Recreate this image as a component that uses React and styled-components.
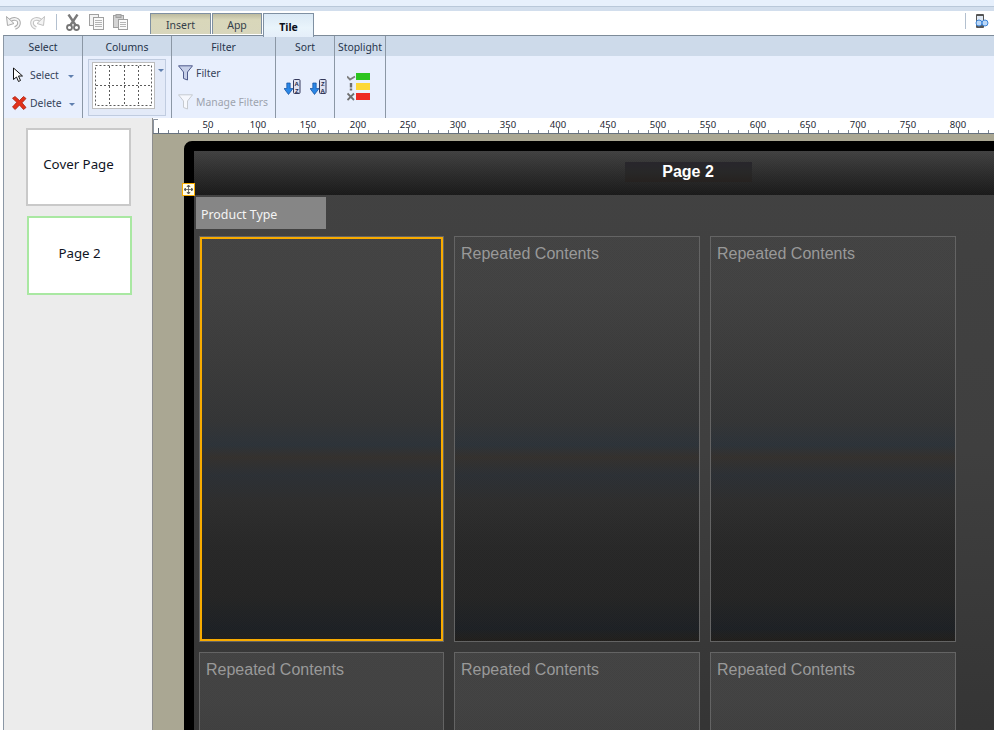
import React from 'react'
import styled, { createGlobalStyle, css } from 'styled-components'

const GlobalStyle = createGlobalStyle`
  html, body { margin: 0; padding: 0; background: #fff; overflow: hidden; }
  body { font-family: "Noto Sans", "Liberation Sans", sans-serif; }
`

const Page = styled.div`
  width: 994px;
  height: 730px;
  display: flex;
  flex-direction: column;
  overflow: hidden;
`

const TopStrip = styled.div`
  height: 11px;
  flex: none;
  background: linear-gradient(#e7f0fc 0 6px, #b9c8d9 6px 7px, #d2deed 7px);
`

const Toolbar = styled.div`
  height: 24px;
  flex: none;
  display: flex;
  align-items: flex-start;
  padding-left: 5px;
`

const ToolIcons = styled.div`
  width: 145px;
  height: 20px;
  padding-top: 1px;
  display: flex;
  align-items: center;
  gap: 9px;
  svg { flex: none; }
`

const ToolSep = styled.span`
  width: 1px;
  height: 16px;
  background: #b3c0cf;
  margin: ${p => p.$margin || '0 0 0 1px'};
  flex: none;
`

const Tabs = styled.div`
  display: flex;
  align-items: flex-start;
  gap: 1px;
  padding-top: 2px;
  flex: 1;
  position: relative;
  z-index: 1;
`

const Tab = styled.div`
  height: 21px;
  box-sizing: border-box;
  width: ${p => p.$width}px;
  border: 1px solid #7f90a2;
  border-bottom: none;
  display: flex;
  align-items: center;
  justify-content: center;
  font-size: 10.5px;
  padding-top: 2px;
  color: #343e4a;
  background: linear-gradient(#bdbb9f, #d9d7ba 30%, #d8d6bc);
  ${p => p.$active && css`
    height: 24px;
    font-weight: 700;
    color: #0b0f1a;
    background: linear-gradient(#dbe9f5, #e9f4fb 60%, #e4eef9);
  `}
`

const ToolEnd = styled.div`
  display: flex;
  align-items: flex-start;
  width: 29px;
  padding-top: 2px;
  flex: none;
`

const Ribbon = styled.div`
  height: 82px;
  flex: none;
  margin-left: 3px;
  display: flex;
  border-top: 1px solid #7d8b99;
  border-left: 1px solid #8b97a5;
  background: linear-gradient(#cddaea 0 20px, #e8effd 20px);
`

const Group = styled.section`
  width: ${p => p.$width}px;
  flex: none;
  box-sizing: border-box;
  border-right: 1px solid #8b97a5;
  display: flex;
  flex-direction: column;
`

const GroupTitle = styled.div`
  height: 20px;
  line-height: 22px;
  text-align: center;
  font-size: 10.4px;
  color: #26344a;
  flex: none;
`

const GroupBody = styled.div`
  flex: 1;
  display: flex;
  position: relative;
  flex-direction: ${p => p.$row ? 'row' : 'column'};
  padding: ${p => p.$padding || '0'};
  gap: ${p => p.$gap || 0}px;
  align-items: ${p => p.$align || 'stretch'};
`

const Action = styled.div`
  display: flex;
  align-items: center;
  height: ${p => p.$height || 28}px;
  font-size: 10.4px;
  color: ${p => p.$muted ? '#9da3ad' : '#35435a'};
  svg { flex: none; }
`

const ActionLabel = styled.span`
  margin-left: ${p => p.$gap || 4}px;
  white-space: nowrap;
`

const Caret = styled.i`
  display: block;
  width: 0;
  height: 0;
  border: 3px solid transparent;
  border-top: 3px solid #5f7fae;
  border-bottom: none;
  margin-left: ${p => p.$left || 9}px;
  margin-top: ${p => p.$top || 3}px;
`

const ColumnsPicker = styled.div`
  margin: 3px 0 0 5px;
  width: 78px;
  height: 57px;
  box-sizing: border-box;
  border: 1px solid #c0cce0;
  background: #e3eaf8;
  padding: 2px 3px;
  display: flex;
  align-items: flex-start;
`

const ColumnsPreview = styled.div`
  width: 63px;
  height: 47px;
  box-sizing: border-box;
  background: #fff;
  border: 1px solid #bdbdbd;
  padding: 2px;
  display: flex;
`

const Workspace = styled.div`
  flex: 1;
  min-height: 0;
  margin-left: 3px;
  display: flex;
`

const Sidebar = styled.aside`
  width: 150px;
  flex: none;
  box-sizing: border-box;
  border-left: 1px solid #8b97a5;
  border-right: 1px solid #8e8e8e;
  background: #ececec;
  padding: 10px 0 0 22px;
  display: flex;
  flex-direction: column;
  gap: 10px;
`

const Thumb = styled.div`
  box-sizing: border-box;
  width: 105px;
  height: ${p => p.$active ? 79 : 78}px;
  margin-left: ${p => p.$active ? 1 : 0}px;
  padding-bottom: 6px;
  background: #fff;
  border: 2px solid ${p => p.$active ? '#a9e8a2' : '#c9c9c9'};
  display: flex;
  align-items: center;
  justify-content: center;
  font-size: 13.3px;
  color: #10151f;
`

const Stage = styled.main`
  flex: 1;
  min-width: 0;
  display: flex;
  flex-direction: column;
  overflow: hidden;
`

const RulerBar = styled.div`
  height: 16px;
  flex: none;
  background: #fff;
  svg { display: block; overflow: visible; }
`

const RulerLabel = styled.text`
  font-family: "Noto Sans", "Liberation Sans", sans-serif;
  font-size: 9.5px;
  fill: #1c2633;
  text-anchor: middle;
`

const Canvas = styled.div`
  flex: 1;
  background: #aaa793;
  padding: 7px 0 0 31px;
  overflow: hidden;
`

const Dashboard = styled.div`
  position: relative;
  width: 1008px;
  height: 620px;
  box-sizing: border-box;
  border: 10px solid #000;
  border-top-left-radius: 8px;
  background: linear-gradient(#424242, #3f3f3f 50%, #343434);
  font-family: "Liberation Sans", Arial, sans-serif;
`

const TitleBar = styled.header`
  height: 44px;
  display: flex;
  align-items: center;
  justify-content: center;
  background-image:
    repeating-conic-gradient(rgba(255, 255, 255, .018) 0 25%, transparent 0 50%),
    linear-gradient(#404040, #2c2c2c 50%, #191919);
  background-size: 2px 2px, auto;
`

const Title = styled.h1`
  margin: 0 0 3px;
  width: 127px;
  height: 20px;
  line-height: 20px;
  text-align: center;
  font-size: 16px;
  font-weight: 700;
  color: #fff;
  background: linear-gradient(#28262c, #282828 50%, #262220);
`

const MoveHandle = styled.div`
  position: absolute;
  left: -12px;
  top: 32px;
  width: 13px;
  height: 13px;
  box-sizing: border-box;
  border: 1px solid #f5ab00;
  background: #fffde8;
  display: flex;
  align-items: center;
  justify-content: center;
`

const FilterChip = styled.div`
  margin: 2px 0 0 2px;
  width: 130px;
  height: 32px;
  box-sizing: border-box;
  padding: 2px 0 0 5px;
  display: flex;
  align-items: center;
  background: #868686;
  color: #f4f4f4;
  font-size: 12.4px;
  font-family: "Noto Sans", "Liberation Sans", sans-serif;
`

const TileGrid = styled.div`
  display: grid;
  grid-template-columns: 245px 246px 246px;
  grid-auto-rows: 406px;
  gap: 10px 10px;
  padding: 7px 0 0 5px;
`

const Tile = styled.div`
  box-sizing: border-box;
  border: 1px solid #646464;
  padding: 6px 6px;
  font-size: 16px;
  line-height: 21px;
  color: #999;
  background-image:
    repeating-conic-gradient(rgba(255, 255, 255, .014) 0 25%, transparent 0 50%),
    linear-gradient(
      #424242 0,
      #414141 50px,
      #3a3a3a 125px,
      #333435 184px,
      #2c3238 208px,
      #33302d 220px,
      #2b2f34 238px,
      #2d2d2d 264px,
      #272727 310px,
      #242424 360px,
      #1c2024 392px,
      #211e1b 100%
    );
  background-size: 2px 2px, auto;
  ${p => p.$selected && css`
    outline: 2px solid #f8ab00;
    outline-offset: -3px;
  `}
`

function UndoIcon({ flip, tone }) {
  return (
    <svg width="16" height="15" viewBox="0 0 16 15" style={flip ? { transform: 'scaleX(-1)' } : undefined}>
      <path d="M5 5.500C9 2.500 14 4 14 8c0 2.500-1.500 4-4 5" fill="none" stroke={tone} strokeWidth="3.600" />
      <path d="M5 5.500C9 2.500 14 4 14 8c0 2.500-1.500 4-4 5" fill="none" stroke="#f4f4f4" strokeWidth="1.600" />
      <path d="M1.500 1.500l1 9 6.500-2z" fill="#f4f4f4" stroke={tone} />
    </svg>
  )
}

function CutIcon() {
  return (
    <svg width="14" height="17" viewBox="0 0 14 17" fill="none">
      <path d="M2.500 .5L9.500 11M11.500 .5L4.500 11" stroke="#7a7a7a" strokeWidth="2.400" />
      <circle cx="3.500" cy="13.500" r="2.500" fill="#fff" stroke="#757575" strokeWidth="1.800" />
      <circle cx="10.500" cy="13.500" r="2.500" fill="#fff" stroke="#757575" strokeWidth="1.800" />
    </svg>
  )
}

function CopyIcon() {
  return (
    <svg width="15" height="16" viewBox="0 0 15 16" fill="#f4f4f4" stroke="#a0a0a0">
      <rect x=".5" y=".5" width="9" height="11" />
      <rect x="4.500" y="3.500" width="10" height="12" fill="#fafafa" />
      <path d="M6 6.500h7M6 8.500h7M6 10.500h7M6 12.500h7" stroke="#b5b5b5" />
    </svg>
  )
}

function PasteIcon() {
  return (
    <svg width="15" height="16" viewBox="0 0 15 16" stroke="#a0a0a0">
      <rect x=".5" y="1.500" width="10" height="12" fill="#d4d4d4" />
      <rect x="3" y=".5" width="5" height="3" fill="#bdbdbd" />
      <rect x="5.500" y="5.500" width="9" height="10" fill="#fafafa" />
      <path d="M7 8.500h6M7 10.500h6M7 12.500h6" stroke="#b5b5b5" />
    </svg>
  )
}

function PhoneIcon() {
  return (
    <svg width="14" height="16" viewBox="0 0 14 16">
      <rect x="1" y="1" width="8" height="14" rx="1" fill="#555" />
      <rect x="2" y="3" width="6" height="9" fill="#dfe9f5" />
      <circle cx="4" cy="10" r="3" fill="#bcd8f7" stroke="#3f86d8" />
      <circle cx="10" cy="10" r="3" fill="#bcd8f7" stroke="#3f86d8" />
    </svg>
  )
}

function CursorIcon() {
  return (
    <svg width="12" height="16" viewBox="0 0 12 16">
      <path d="M1.500 1v11.500l3-2.500 2 4.500 2-1-2-4.500h4z" fill="#fff" stroke="#111" strokeLinejoin="round" />
    </svg>
  )
}

function DeleteIcon() {
  return (
    <svg width="15" height="16" viewBox="0 0 15 16">
      <path d="M3 1.500l4.500 4 4-4 2.500 2-4 4.300 4 4.700-2.500 2-4-4.500-4.300 4.500-2.700-2.500 4.300-4.700-4.300-4z" fill="#e3311a" stroke="#a8200e" strokeWidth=".8" strokeLinejoin="round" />
    </svg>
  )
}

function FunnelIcon({ muted }) {
  return (
    <svg width="15" height="16" viewBox="0 0 15 16">
      <path
        d="M.5 .8h14l-5 6.200v8l-4-1.500v-6.500z"
        fill={muted ? '#f6f8fd' : '#c6cfe8'}
        stroke={muted ? '#c6cad0' : '#4f5b8c'}
      />
    </svg>
  )
}

function SortIcon({ first, second }) {
  return (
    <svg width="17" height="18" viewBox="0 0 17 18">
      <path d="M2.800 4h3.400v5.500h2.800L4.500 15.500 0 9.500h2.800z" fill="#2a86e6" stroke="#0f4d9e" strokeWidth=".7" />
      <rect x="9.500" y=".5" width="6.500" height="14" rx="1" fill="#dfe2f0" stroke="#34395c" />
      <text x="12.750" y="7" fontSize="6" fontWeight="700" fontFamily="Liberation Sans" textAnchor="middle" fill="#22264a">{first}</text>
      <text x="12.750" y="13.500" fontSize="6" fontWeight="700" fontFamily="Liberation Sans" textAnchor="middle" fill="#22264a">{second}</text>
    </svg>
  )
}

function StoplightIcon() {
  return (
    <svg width="23" height="28" viewBox="0 0 23 28">
      <path d="M0 3.500l3 3 5-3" fill="none" stroke="#7f7f7f" strokeWidth="1.800" />
      <rect x="9" y="0" width="14" height="7" fill="#2cc41f" />
      <path d="M4 10v4.500M4 15.500v2" stroke="#6f6f6f" strokeWidth="2.400" />
      <rect x="9" y="10" width="14" height="7" fill="#fdd835" />
      <path d="M.5 20.500l6.500 6.500M7 20.500L.5 27" stroke="#6f6f6f" strokeWidth="1.800" />
      <rect x="9" y="20" width="14" height="7" fill="#ee2a22" />
    </svg>
  )
}

function ColumnsGrid() {
  return (
    <svg width="57" height="41" viewBox="0 0 57 41" fill="none" stroke="#5a5a5a" strokeDasharray="2 2">
      <rect x=".5" y=".5" width="56" height="40" />
      <path d="M14.500 1v39M29.500 1v39M43.500 1v39M1 20.500h55" />
    </svg>
  )
}

function MoveIcon() {
  return (
    <svg width="9" height="9" viewBox="0 0 9 9" fill="#555" stroke="#555" strokeWidth=".8">
      <path d="M4.500 0v9M0 4.500h9" fill="none" />
      <path d="M3 1.500L4.500 0 6 1.500zM3 7.500L4.500 9 6 7.500zM1.500 3L0 4.500 1.500 6zM7.500 3L9 4.500 7.500 6z" />
    </svg>
  )
}

function Ruler() {
  const ticks = []
  for (let n = 0; n <= 830; n += 10) {
    const x = 5.5 + n
    const tall = n % 50 === 0
    ticks.push(<path key={n} d={`M${x} ${tall ? 10 : 12}V15`} stroke={tall ? '#56606e' : '#7c8694'} />)
  }
  const labels = []
  for (let n = 50; n <= 800; n += 50) {
    labels.push(<RulerLabel key={n} x={5 + n} y={10}>{n}</RulerLabel>)
  }
  return (
    <svg width="841" height="16" viewBox="0 0 841 16">
      <path d="M.5 16V1.500H5" fill="none" stroke="#8a93a0" />
      <path d="M0 15.500H841" stroke="#67727f" />
      {ticks}
      {labels}
    </svg>
  )
}

export default function App() {
  return (
    <Page>
      <GlobalStyle />
      <TopStrip />
      <Toolbar>
        <ToolIcons>
          <UndoIcon tone="#a9a9a9" />
          <UndoIcon flip tone="#c0c0c0" />
          <ToolSep />
          <CutIcon />
          <CopyIcon />
          <PasteIcon />
        </ToolIcons>
        <Tabs>
          <Tab $width={61}>Insert</Tab>
          <Tab $width={50}>App</Tab>
          <Tab $width={51} $active>Tile</Tab>
        </Tabs>
        <ToolEnd>
          <ToolSep $margin="0 9px 0 0" />
          <PhoneIcon />
        </ToolEnd>
      </Toolbar>
      <Ribbon>
        <Group $width={79}>
          <GroupTitle>Select</GroupTitle>
          <GroupBody $padding="5px 0 0 8px">
            <Action>
              <CursorIcon />
              <ActionLabel $gap={6}>Select</ActionLabel>
              <Caret $left={9} />
            </Action>
            <Action>
              <DeleteIcon />
              <ActionLabel $gap={3}>Delete</ActionLabel>
              <Caret $left={7} />
            </Action>
          </GroupBody>
        </Group>
        <Group $width={89}>
          <GroupTitle>Columns</GroupTitle>
          <GroupBody>
            <ColumnsPicker>
              <ColumnsPreview><ColumnsGrid /></ColumnsPreview>
              <Caret $left={3} $top={7} />
            </ColumnsPicker>
          </GroupBody>
        </Group>
        <Group $width={104}>
          <GroupTitle>Filter</GroupTitle>
          <GroupBody $padding="3px 0 0 6px">
            <Action>
              <FunnelIcon />
              <ActionLabel $gap={3}>Filter</ActionLabel>
            </Action>
            <Action $muted $height={30}>
              <FunnelIcon muted />
              <ActionLabel $gap={3}>Manage Filters</ActionLabel>
            </Action>
          </GroupBody>
        </Group>
        <Group $width={59}>
          <GroupTitle>Sort</GroupTitle>
          <GroupBody $row $gap={9} $padding="23px 0 0 8px" $align="flex-start">
            <SortIcon first="A" second="Z" />
            <SortIcon first="Z" second="A" />
          </GroupBody>
        </Group>
        <Group $width={51}>
          <GroupTitle>Stoplight</GroupTitle>
          <GroupBody $padding="17px 0 0 12px">
            <StoplightIcon />
          </GroupBody>
        </Group>
      </Ribbon>
      <Workspace>
        <Sidebar>
          <Thumb>Cover Page</Thumb>
          <Thumb $active>Page 2</Thumb>
        </Sidebar>
        <Stage>
          <RulerBar><Ruler /></RulerBar>
          <Canvas>
            <Dashboard>
              <MoveHandle><MoveIcon /></MoveHandle>
              <TitleBar><Title>Page 2</Title></TitleBar>
              <FilterChip>Product Type</FilterChip>
              <TileGrid>
                <Tile $selected />
                <Tile>Repeated Contents</Tile>
                <Tile>Repeated Contents</Tile>
                <Tile>Repeated Contents</Tile>
                <Tile>Repeated Contents</Tile>
                <Tile>Repeated Contents</Tile>
              </TileGrid>
            </Dashboard>
          </Canvas>
        </Stage>
      </Workspace>
    </Page>
  )
}
